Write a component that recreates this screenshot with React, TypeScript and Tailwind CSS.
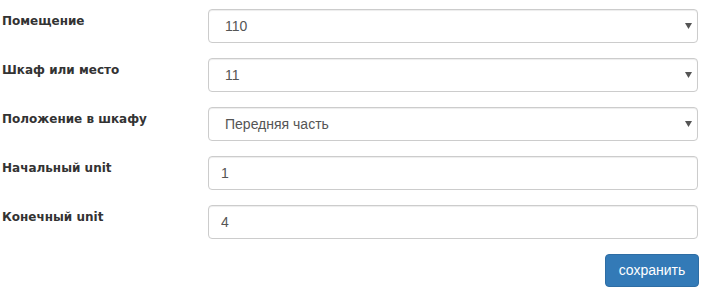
const fields = [
  { label: 'Помещение', value: '110', select: true },
  { label: 'Шкаф или место', value: '11', select: true },
  { label: 'Положение в шкафу', value: 'Передняя часть', select: true },
  { label: 'Начальный unit', value: '1', select: false },
  { label: 'Конечный unit', value: '4', select: false },
]

function Caret() {
  return (
    <svg className="pointer-events-none absolute right-[6px] top-[14px]" width="7" height="6" viewBox="0 0 7 6">
      <path d="M0 0h7L3.5 6z" fill="#555" />
    </svg>
  )
}

function App() {
  return (
    <main className="min-h-screen bg-white pt-[9px] pr-[4px] pl-[2px] font-['Liberation_Sans',Arial,sans-serif]">
      <form className="flex flex-col">
        {fields.map((field) => (
          <div key={field.label} className="mb-[15px] grid grid-cols-[206px_1fr]">
            <label className="pt-[3px] font-['DejaVu_Sans',Verdana,sans-serif] text-[12px] leading-[18px] font-bold text-[#333]">
              {field.label}
            </label>
            {field.select ? (
              <div className="relative">
                <div className="h-[34px] rounded-[4px] border border-[#ccc] bg-white pl-[16px] text-[14px] leading-[32px] text-[#555] shadow-[inset_0_1px_1px_rgba(0,0,0,0.075)]">
                  {field.value}
                </div>
                <Caret />
              </div>
            ) : (
              <input
                readOnly
                value={field.value}
                className="h-[34px] w-full rounded-[4px] border border-[#ccc] bg-white px-[12px] text-[14px] text-[#555] shadow-[inset_0_1px_1px_rgba(0,0,0,0.075)] outline-none"
              />
            )}
          </div>
        ))}
        <div className="flex justify-end">
          <button
            type="button"
            className="mr-[-1px] h-[33px] w-[94px] rounded-[4px] border border-[#2e6da4] bg-[#337ab7] text-[14px] text-white"
          >
            сохранить
          </button>
        </div>
      </form>
    </main>
  )
}

export default App
